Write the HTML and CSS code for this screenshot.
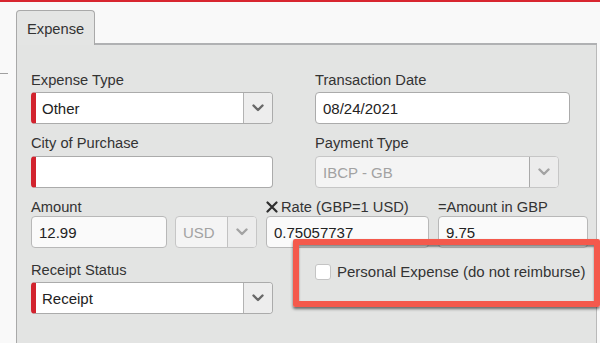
FILE: index.html
```html
<!DOCTYPE html>
<html>
<head>
<meta charset="utf-8">
<link rel="stylesheet" href="styles.css">
</head>
<body>
<div class="topbar"></div>
<div class="page">
  <div class="gutter"><div class="gutter-line"></div></div>
  <div class="main">
    <div class="tabbar">
      <div class="tab">Expense</div>
      <div class="tab-fill"></div>
    </div>
    <div class="panel">
      <div class="row row1">
        <div class="field w-left">
          <label class="lbl">Expense Type</label>
          <div class="select required">
            <span class="val">Other</span>
            <span class="btn"><svg width="12" height="8" viewBox="0 0 12 8"><path d="M1.5 1.5 L6 6 L10.5 1.5" fill="none" stroke="#686868" stroke-width="2.4" stroke-linecap="round" stroke-linejoin="round"/></svg></span>
          </div>
        </div>
        <div class="field w-date">
          <label class="lbl">Transaction Date</label>
          <div class="input">08/24/2021</div>
        </div>
      </div>
      <div class="row row2">
        <div class="field w-left">
          <label class="lbl">City of Purchase</label>
          <div class="input required"></div>
        </div>
        <div class="field w-pay">
          <label class="lbl">Payment Type</label>
          <div class="select disabled">
            <span class="val">IBCP - GB</span>
            <span class="btn"><svg width="12" height="8" viewBox="0 0 12 8"><path d="M1.5 1.5 L6 6 L10.5 1.5" fill="none" stroke="#a3a3a3" stroke-width="2.4" stroke-linecap="round" stroke-linejoin="round"/></svg></span>
          </div>
        </div>
      </div>
      <div class="row row3">
        <div class="field w-amount">
          <label class="lbl">Amount</label>
          <div class="input ro">12.99</div>
        </div>
        <div class="field w-cur">
          <label class="lbl">&nbsp;</label>
          <div class="select disabled">
            <span class="val">USD</span>
            <span class="btn"><svg width="12" height="8" viewBox="0 0 12 8"><path d="M1.5 1.5 L6 6 L10.5 1.5" fill="none" stroke="#a3a3a3" stroke-width="2.4" stroke-linecap="round" stroke-linejoin="round"/></svg></span>
          </div>
        </div>
        <div class="field w-rate">
          <label class="lbl lbl-icon"><svg class="x-icon" width="12" height="12" viewBox="0 0 12 12"><path d="M1.5 1.5 L10.5 10.5 M10.5 1.5 L1.5 10.5" stroke="#2e2e2e" stroke-width="2.2" stroke-linecap="round"/></svg>Rate (GBP=1 USD)</label>
          <div class="input ro">0.75057737</div>
        </div>
        <div class="field w-gbp">
          <label class="lbl">=Amount in GBP</label>
          <div class="input ro">9.75</div>
        </div>
      </div>
      <div class="row row4">
        <div class="field w-left">
          <label class="lbl">Receipt Status</label>
          <div class="select required">
            <span class="val">Receipt</span>
            <span class="btn"><svg width="12" height="8" viewBox="0 0 12 8"><path d="M1.5 1.5 L6 6 L10.5 1.5" fill="none" stroke="#686868" stroke-width="2.4" stroke-linecap="round" stroke-linejoin="round"/></svg></span>
          </div>
        </div>
        <div class="check-row">
          <span class="checkbox"></span>
          <span class="check-lbl">Personal Expense (do not reimburse)</span>
        </div>
      </div>
    </div>
  </div>
  <div class="highlight"></div>
</div>
</body>
</html>
```
FILE: styles.css
```css
html, body {
  margin: 0;
  padding: 0;
  width: 600px;
  height: 343px;
  overflow: hidden;
  background: #f9f9f9;
  font-family: "Liberation Sans", Arial, Helvetica, sans-serif;
  color: #333;
}
.topbar {
  height: 2px;
  background: #d8262f;
}
.page {
  position: relative;
  display: flex;
  height: 341px;
}
.gutter {
  width: 16px;
  flex: none;
}
.gutter-line {
  margin-top: 71px;
  width: 8px;
  height: 1px;
  background: #a0a0a0;
}
.main {
  flex: none;
  width: 581px;
  display: flex;
  flex-direction: column;
}
.tabbar {
  display: flex;
  height: 43px;
  padding-top: 8px;
  box-sizing: border-box;
}
.tab {
  width: 79px;
  box-sizing: border-box;
  height: 35px;
  border: 1px solid #a9a9a9;
  border-bottom: none;
  border-radius: 4px 4px 0 0;
  background: #e4e5e4;
  font-size: 14.7px;
  padding: 10px 0 0 10px;
  color: #333;
  line-height: 16px;
}
.tab-fill {
  flex: 1;
  height: 35px;
  box-sizing: border-box;
  border-bottom: 2px solid #b0b1b3;
}
.panel {
  flex: 1;
  background: #e3e4e3;
  border-left: 1px solid #a9a9a9;
  border-right: 1px solid #b9b9b9;
  padding: 26px 0 0 14px;
}
.row {
  display: flex;
  align-items: flex-start;
}
.row1, .row2, .row4 { gap: 42px; }
.row2 { margin-top: 10px; }
.row3 { margin-top: 10px; gap: 8px; }
.row4 { margin-top: 13px; }
.field {
  display: flex;
  flex-direction: column;
}
.lbl {
  display: flex;
  align-items: center;
  height: 18px;
  font-size: 14.7px;
  line-height: 18px;
  color: #333;
  margin-bottom: 3px;
  white-space: nowrap;
}
.row2 .lbl { margin-bottom: 4px; }
.row3 .lbl { margin-bottom: 0; }
.x-icon { margin-right: 3px; }
.w-left { width: 242px; }
.w-date { width: 255px; }
.w-pay { width: 244px; }
.w-amount { width: 136px; }
.w-cur { width: 82px; }
.w-rate { width: 163px; margin-left: 1px; }
.w-gbp { width: 150px; margin-left: 1px; }

.input, .select {
  height: 32px;
  box-sizing: border-box;
  border: 1px solid #ababab;
  border-radius: 4px;
  background: #fff;
  font-size: 15px;
  color: #222;
  display: flex;
  align-items: center;
  padding-left: 7px;
}
.input.ro { background: #fafafa; border-color: #b8b8b8; }
.required {
  border-left: 5px solid #d2232e;
  padding-left: 6px;
}
.select { padding-right: 0; }
.select .val { flex: 1; }
.select .btn {
  width: 29px;
  height: 100%;
  box-sizing: border-box;
  border-left: 1px solid #b3b3b3;
  background: #ededed;
  border-radius: 0 3px 3px 0;
  display: flex;
  align-items: center;
  justify-content: center;
}
.select.disabled {
  background: #f4f4f4;
  border-color: #c6c6c6;
  color: #a2a2a2;
}
.select.disabled .btn {
  background: #ececec;
  border-left-color: #c2c2c2;
}
.w-pay .select.disabled .btn { border-color: #a9a9a9; border-width: 0 0 0 1px; }
.check-row {
  display: flex;
  align-items: center;
  height: 18px;
  margin-top: 1px;
}
.checkbox {
  width: 16px;
  height: 16px;
  box-sizing: border-box;
  background: #fff;
  border: 1px solid #c4c4c4;
  border-radius: 3px;
  margin-right: 6px;
  margin-top: 2px;
}
.check-lbl {
  font-size: 15px;
  color: #333;
  white-space: nowrap;
}
.highlight {
  position: absolute;
  left: 293px;
  top: 237px;
  width: 307px;
  height: 68px;
  box-sizing: border-box;
  border: 6px solid #f4594c;
  border-radius: 2px;
  box-shadow: 0 2px 3px rgba(0, 0, 0, 0.55), inset 0 2px 2px rgba(0, 0, 0, 0.45);
}
```
